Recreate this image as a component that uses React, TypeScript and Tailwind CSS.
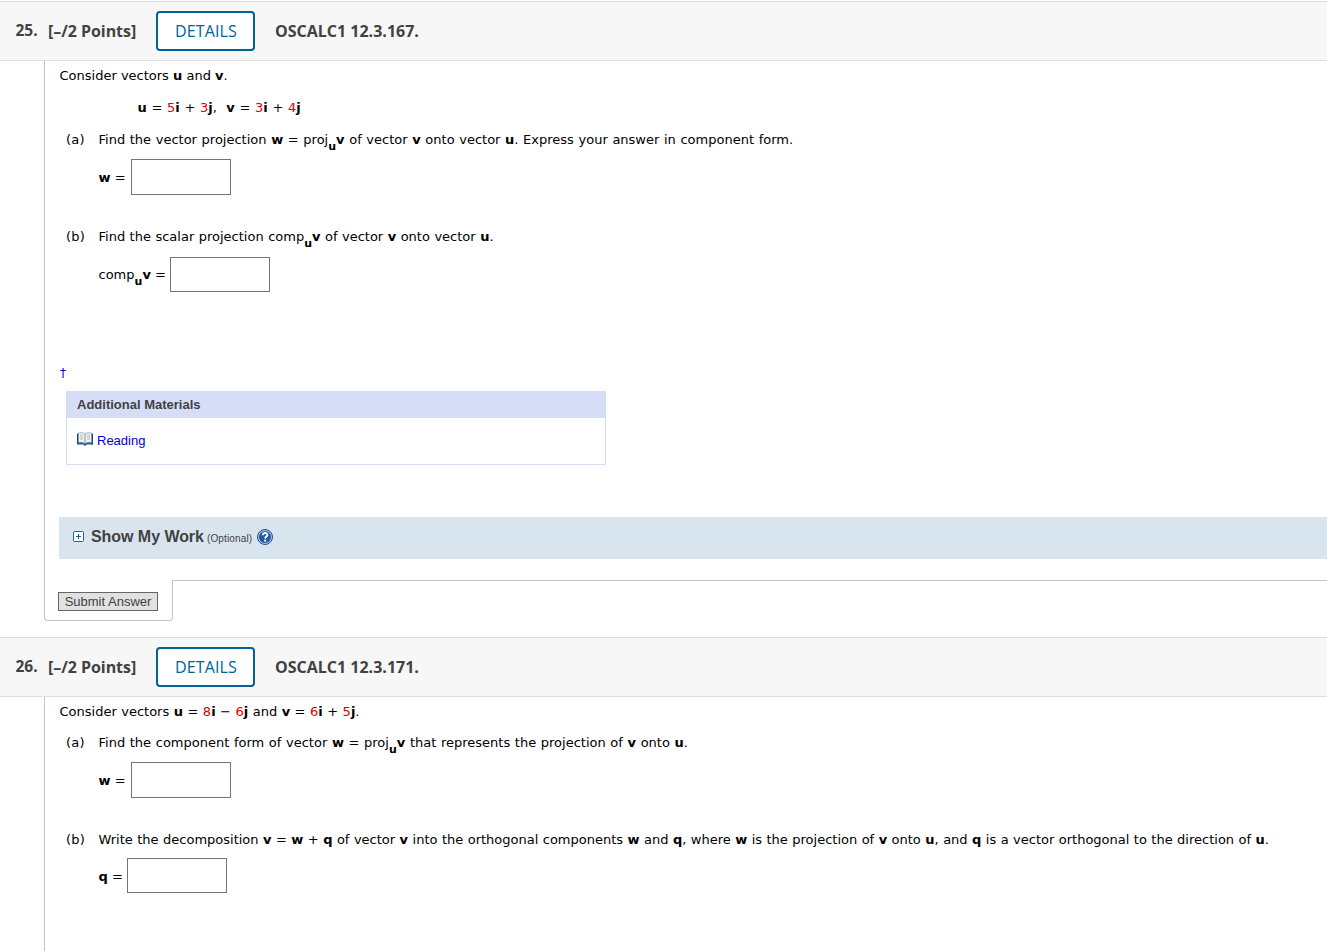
import type { ReactNode } from 'react';

function Num({ children }: { children: ReactNode }) {
  return <span className="text-[#dd0000]">{children}</span>;
}

function SubU() {
  return <b className="relative top-[6px] text-[11px] leading-none">u</b>;
}

function QuestionHeader({ number, code }: { number: number; code: string }) {
  return (
    <header className="flex h-[60px] items-center border-y border-[#dedede] bg-[#f7f7f7] pl-[15px] font-['Open_Sans',sans-serif] text-base font-bold whitespace-nowrap text-[#424242]">
      <span className="w-[33px] pb-px pl-[0.5px] text-[15.5px]">{number}.</span>
      <span className="w-[108px] tracking-[-0.05px]">[–/2 Points]</span>
      <button
        type="button"
        className="h-10 w-[99px] rounded-[4px] border-2 border-[#006298] bg-white pl-px text-base font-normal tracking-[0.15px] text-[#006298]"
      >
        DETAILS
      </button>
      <span className="ml-5">{code}</span>
    </header>
  );
}

function Part({ label, children }: { label: string; children: ReactNode }) {
  return (
    <div className="flex h-5 pl-[7px]">
      <span className="w-8 tracking-[0.2px]">({label})</span>
      <p className="pl-[0.5px]">{children}</p>
    </div>
  );
}

function Answer({ label, className, inputClassName = 'h-9' }: { label: ReactNode; className: string; inputClassName?: string }) {
  return (
    <div className="flex pl-[39px]">
      <label className={`flex items-center ${className}`}>
        <span>{label}</span>
      </label>
      <input type="text" className={`w-[100px] border border-[#767676] bg-white px-1 ${inputClassName}`} />
    </div>
  );
}

function BookIcon() {
  return (
    <svg width="16" height="14" viewBox="0 0 16 14">
      <path d="M0 2h16v10.500h-6L8 14l-2-1.500H0z" fill="#285f92" />
      <path d="M0 1.500h1.500v10H0zM14.500 1.500H16v11h-1.500z" fill="#174a78" />
      <path d="M1.500 1Q5 0 8 1.500Q11 0 14.500 1v9.500Q11 9.500 8 11.500Q5 9.500 1.500 10.500z" fill="#f4f4f1" stroke="#6f93b0" strokeWidth=".6" />
      <path d="M8 2v9" stroke="#8a8d8e" />
      <path d="M3 3h3M3 5h3M3 7h3M10 3h3M10 5h3M10 7h3" stroke="#aaa" strokeWidth=".8" />
    </svg>
  );
}

function HelpIcon() {
  return (
    <svg width="16" height="16" viewBox="0 0 16 16">
      <circle cx="8" cy="8" r="7.500" fill="#a9c3e4" stroke="#244f91" />
      <circle cx="8" cy="8" r="6" fill="#2857a4" />
      <path d="M5.700 6.200c0-3.100 4.800-2.900 4.700-.1C10.300 7.500 8.200 7.600 8.200 9.500" fill="none" stroke="#fff" strokeWidth="1.900" />
      <path d="M7.200 10.700h2v1.800h-2z" fill="#fff" />
    </svg>
  );
}

function PlusIcon() {
  return (
    <svg width="11" height="11" viewBox="0 0 11 11" className="mb-px">
      <rect x=".5" y=".5" width="10" height="10" rx="1" fill="#fff" stroke="#2b5e96" />
      <path d="M3 5.500h5M5.500 3v5" stroke="#2b5e96" />
    </svg>
  );
}

function AdditionalMaterials() {
  return (
    <section className="ml-[7px] h-[74px] w-[540px] border border-[#d6ddf7] font-['Liberation_Sans',Arial,sans-serif]">
      <h3 className="h-[26px] bg-[#d6ddf7] pl-2.5 text-[13px] leading-[25px] font-bold text-[#424242]">
        Additional Materials
      </h3>
      <a href="#reading" className="mt-[11px] flex h-5 items-center gap-1 pl-2.5 text-[13px] text-[#0000cc]">
        <BookIcon />
        <span className="pt-[3px]">Reading</span>
      </a>
    </section>
  );
}

function ShowMyWork() {
  return (
    <div className="flex h-[42px] items-center bg-[#d9e5ee] pb-0.5 pl-3.5 font-['Liberation_Sans',Arial,sans-serif] text-[#424242]">
      <PlusIcon />
      <b className="ml-[7px] text-base tracking-[-0.05px]">Show My Work</b>
      <span className="mt-1 ml-[3px] w-[50px] text-[10px] tracking-[0.15px]">(Optional)</span>
      <HelpIcon />
    </div>
  );
}

export default function App() {
  return (
    <main className="h-[951px] w-[1327px] overflow-hidden bg-white pt-px font-[Verdana,'DejaVu_Sans',sans-serif] text-[13px] leading-5 whitespace-nowrap text-black">
      <QuestionHeader number={25} code="OSCALC1 12.3.167." />
      <section className="pl-11">
        <div className="h-[519px] border-l border-[#c4c4c4] pt-[5px] pl-3.5">
          <p className="pl-[0.5px]">
            Consider vectors <b>u</b> and <b>v</b>.
          </p>
          <p className="mt-3 pl-[78.5px] [word-spacing:0.55px]">
            <b>u</b> = <Num>5</Num><b>i</b> + <Num>3</Num><b>j</b>,&nbsp; <b>v</b> = <Num>3</Num><b>i</b> + <Num>4</Num><b>j</b>
          </p>
          <div className="mt-3 [word-spacing:0.5px]">
            <Part label="a">
              Find the vector projection <b>w</b> = proj<SubU /><b>v</b> of vector <b>v</b> onto vector <b>u</b>. Express your answer in component form.
            </Part>
          </div>
          <div className="mt-[9px]">
            <Answer label={<><b>w</b> =</>} className="w-[33px] pt-0.5 pl-[0.5px]" />
          </div>
          <div className="mt-8 [word-spacing:0.35px]">
            <Part label="b">
              Find the scalar projection comp<SubU /><b>v</b> of vector <b>v</b> onto vector <b>u</b>.
            </Part>
          </div>
          <div className="mt-[10px]">
            <Answer label={<>comp<SubU /><b>v</b> =</>} className="w-[72px] pl-[0.5px]" inputClassName="h-[35px]" />
          </div>
          <div className="mt-[71px] h-7 pl-px text-[12px] text-[#0000cc]">†</div>
          <AdditionalMaterials />
          <div className="mt-[52px]">
            <ShowMyWork />
          </div>
        </div>
        <div className="flex h-[41px]">
          <div className="w-[129px] rounded-b-[4px] border-r border-b border-l border-[#c4c4c4] pt-3 pl-[13px]">
            <button
              type="button"
              className="block h-[19px] w-[100px] border border-[#666] bg-[#e1e1e1] font-['Liberation_Sans',Arial,sans-serif] text-[13px] leading-[17px] text-[#424242]"
            >
              Submit Answer
            </button>
          </div>
          <div className="grow border-t border-[#c4c4c4]" />
        </div>
      </section>
      <div className="mt-4">
        <QuestionHeader number={26} code="OSCALC1 12.3.171." />
      </div>
      <section className="pl-11">
        <div className="h-[254px] border-l border-[#c4c4c4] pt-[5px] pl-3.5">
          <p className="pl-[0.5px] [word-spacing:0.35px]">
            Consider vectors <b>u</b> = <Num>8</Num><b>i</b> − <Num>6</Num><b>j</b> and <b>v</b> = <Num>6</Num><b>i</b> + <Num>5</Num><b>j</b>.
          </p>
          <div className="mt-[11px] [word-spacing:0.5px]">
            <Part label="a">
              Find the component form of vector <b>w</b> = proj<SubU /><b>v</b> that represents the projection of <b>v</b> onto <b>u</b>.
            </Part>
          </div>
          <div className="mt-[9px]">
            <Answer label={<><b>w</b> =</>} className="w-[33px] pt-0.5 pl-[0.5px]" />
          </div>
          <div className="mt-8 [word-spacing:0.32px]">
            <Part label="b">
              Write the decomposition <b>v</b> = <b>w</b> + <b>q</b> of vector <b>v</b> into the orthogonal components <b>w</b> and <b>q</b>, where <b>w</b> is the projection of <b>v</b> onto <b>u</b>, and <b>q</b> is a vector orthogonal to the direction of <b>u</b>.
            </Part>
          </div>
          <div className="mt-2">
            <Answer label={<><b>q</b> =</>} className="w-[29px] pt-[3px] pl-[0.5px]" inputClassName="h-[35px]" />
          </div>
        </div>
      </section>
    </main>
  );
}
